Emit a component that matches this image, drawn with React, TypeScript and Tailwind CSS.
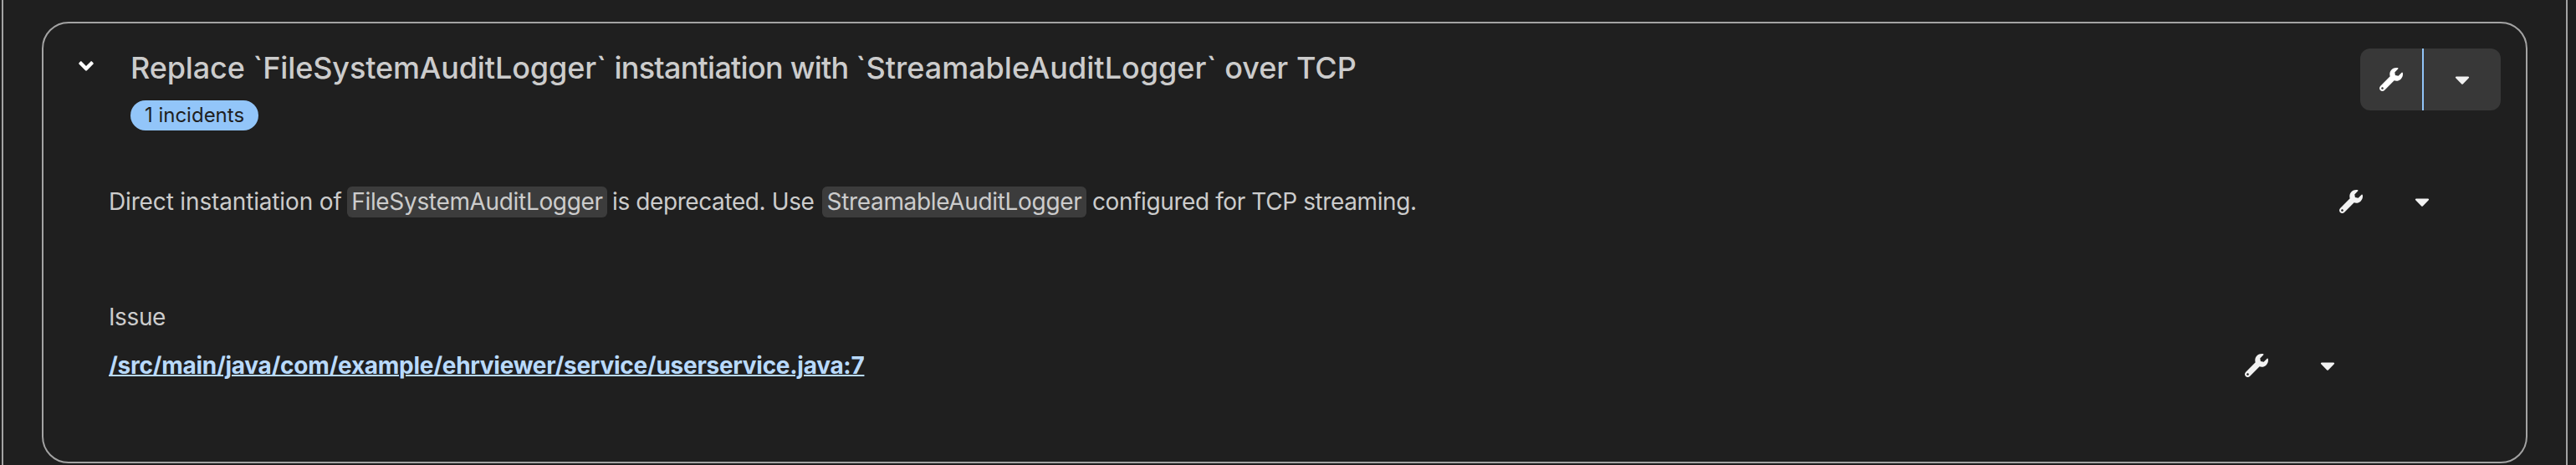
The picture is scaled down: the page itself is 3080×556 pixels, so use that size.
import { FaWrench, FaCaretDown, FaAngleDown } from "react-icons/fa";

function Code({ children, box }: { children: string; box: string }) {
  return (
    <code className={`${box} flex h-[37px] shrink-0 items-center justify-center rounded-md bg-[#3c3c3c] font-['Inter'] tracking-[-0.33px]`}>
      {children}
    </code>
  );
}

function PlainActions() {
  return (
    <div className="flex h-[74px] items-center text-[#f2f2f2]">
      <button className="flex w-[75px] justify-center">
        <FaWrench className="size-7" />
      </button>
      <button className="flex w-[94px] justify-center pl-[2px]">
        <FaCaretDown className="size-7" />
      </button>
    </div>
  );
}

export default function App() {
  return (
    <div className="flex h-[556px] w-[3080px] overflow-hidden bg-[#1f1f1f] pl-[2px] pr-[10px] font-['Inter',sans-serif] text-[28px] text-[#cccccc]">
      <div className="flex grow border-x-2 border-[#a3a3a3] pl-[46px] pr-[46px] pt-[26px]">
        <section className="flex h-[528px] grow flex-col rounded-[32px] border-2 border-[#a3a3a3]">
          <header className="flex h-[138px] items-start pl-[37px] pr-[30px] pt-[30px]">
            <button className="mt-[7px] flex w-7 justify-center text-white">
              <FaAngleDown className="size-7" />
            </button>
            <div className="ml-[39px] flex grow flex-col items-start">
              <h2 className="h-[46px] whitespace-pre text-[36px] font-medium leading-[46px]">
                <span className="tracking-[-0.13px]">Replace `FileSystemAuditLogger` </span>
                <span className="tracking-[-0.75px]">instantiation with </span>
                <span>`StreamableAuditLogger` over TCP</span>
              </h2>
              <span className="mt-[16px] flex h-9 w-[153px] items-center justify-center rounded-full bg-[#92c5f9] text-[24px] text-[#1f1f1f]">
                1 incidents
              </span>
            </div>
            <div className="flex h-[74px] overflow-hidden rounded-xl bg-[#383838] text-white">
              <button className="flex w-[74px] items-center justify-center">
                <FaWrench className="size-7" />
              </button>
              <div className="w-[2px] bg-[#92c5f9]" />
              <button className="flex w-[92px] items-center justify-center text-[#f2f2f2]">
                <FaCaretDown className="size-7" />
              </button>
            </div>
          </header>
          <div className="mt-[38px] flex h-[74px] items-center justify-between pl-[78px] pr-[78px]">
            <p className="flex items-center whitespace-pre">
              <span className="w-[285px] shrink-0 tracking-[-0.15px]">Direct instantiation of </span>
              <Code box="w-[311px]">FileSystemAuditLogger</Code>
              <span className="w-[257px] shrink-0 pl-[6px] tracking-[-0.4px]">is deprecated. Use </span>
              <Code box="w-[316px]">StreamableAuditLogger</Code>
              <span className="pl-[7px] tracking-[-0.4px]">configured for TCP streaming.</span>
            </p>
            <PlainActions />
          </div>
          <div className="mt-[80px] pl-[78px] leading-[42px] tracking-[-0.4px]">Issue</div>
          <div className="flex h-[74px] items-center justify-between pl-[78px] pr-[191px]">
            <a className="font-bold tracking-[-0.28px] text-[#b9dafc] underline decoration-2">
              /src/main/java/com/example/ehrviewer/service/userservice.java:7
            </a>
            <PlainActions />
          </div>
        </section>
      </div>
    </div>
  );
}
